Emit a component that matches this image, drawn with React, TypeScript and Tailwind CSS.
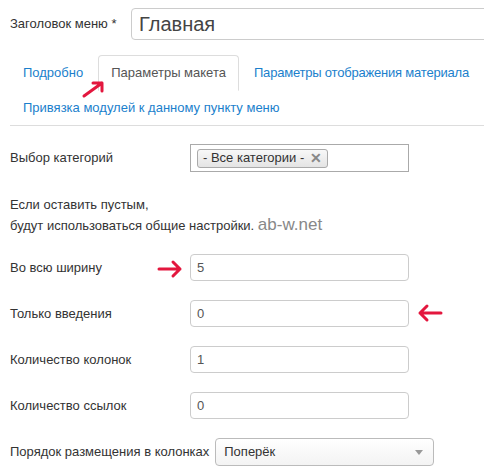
const font = { fontFamily: '"Liberation Sans", Arial, sans-serif' };

function Arrow({ className, d }: { className: string; d: string }) {
  return (
    <svg className={`pointer-events-none absolute ${className}`} viewBox="0 0 26 20" fill="none">
      <path d={d} stroke="#e3173e" strokeWidth="3" strokeLinecap="round" strokeLinejoin="round" />
    </svg>
  );
}

function Field({ label, value }: { label: string; value: string }) {
  return (
    <div className="flex h-[27px] items-center">
      <label className="w-[180px] shrink-0">{label}</label>
      <div className="flex h-[27px] w-[219px] items-center rounded-[4px] border border-[#ccc] px-[6px] text-[#555]">
        {value}
      </div>
    </div>
  );
}

export default function App() {
  return (
    <div
      style={font}
      className="relative h-[469px] w-[484px] overflow-hidden bg-white px-[10px] text-[13px] text-[#333]"
    >
      <div className="flex items-center pt-[8px]">
        <label className="w-[121px] shrink-0">Заголовок меню *</label>
        <div className="flex h-[32px] w-[400px] shrink-0 items-center rounded-[4px] border border-[#ccc] px-[7px] text-[20px] text-[#444]">
          Главная
        </div>
      </div>

      <div className="mt-[15px] -mr-[10px] border-b border-[#ddd] whitespace-nowrap">
        <div className="flex">
          <a className="flex h-[35px] items-center px-[13px] text-[#1b7fcc]">Подробно</a>
          <a className="ml-[2px] flex h-[36px] items-center rounded-t-[4px] border border-[#ddd] border-b-white bg-white px-[12px] text-[#555]">
            Параметры макета
          </a>
          <a className="ml-[2px] flex h-[35px] items-center px-[13px] tracking-[-0.2px] text-[#1b7fcc]">
            Параметры отображения материала
          </a>
        </div>
        <div className="flex">
          <a className="flex h-[34px] items-center px-[13px] text-[#1b7fcc]">
            Привязка модулей к данному пункту меню
          </a>
        </div>
      </div>

      <div className="mt-[18px] flex h-[28px] items-center">
        <label className="w-[180px] shrink-0">Выбор категорий</label>
        <div className="flex h-[28px] w-[219px] items-center border border-[#aaa] px-[6px]">
          <span className="flex h-[19px] items-center gap-[6px] rounded-[3px] border border-[#aaa] bg-gradient-to-b from-[#f8f8f8] to-[#e4e4e4] pl-[5px] pr-[5px]">
            - Все категории -
            <span className="text-[14px] font-bold leading-none text-[#888]">✕</span>
          </span>
        </div>
      </div>

      <p className="mt-[23px] leading-[20px]">
        Если оставить пустым,
        <br />
        будут использоваться общие настройки.{" "}
        <span className="text-[17px] text-[#888]">ab-w.net</span>
      </p>

      <div className="mt-[18px] flex flex-col gap-[19px]">
        <Field label="Во всю ширину" value="5" />
        <Field label="Только введения" value="0" />
        <Field label="Количество колонок" value="1" />
        <Field label="Количество ссылок" value="0" />
        <div className="flex h-[28px] items-center">
          <label className="shrink-0">Порядок размещения в колонках</label>
          <div className="ml-[6px] flex h-[28px] w-[219px] items-center justify-between rounded-[4px] border border-[#bbb] bg-gradient-to-b from-white to-[#f3f3f3] px-[8px] text-[#333]">
            Поперёк
            <svg width="8" height="5" viewBox="0 0 8 5" className="mr-[2px]">
              <path d="M0 0h8L4 5z" fill="#999" />
            </svg>
          </div>
        </div>
      </div>

      <Arrow className="left-[80px] top-[79px] h-[20px] w-[26px]" d="M4 17 L22 4 M13 4 H22 V12" />
      <Arrow className="left-[157px] top-[259px] h-[20px] w-[26px]" d="M2 10 H23 M16 3 L23 10 L16 17" />
      <Arrow className="left-[417px] top-[303px] h-[20px] w-[26px]" d="M24 10 H3 M10 3 L3 10 L10 17" />
    </div>
  );
}
